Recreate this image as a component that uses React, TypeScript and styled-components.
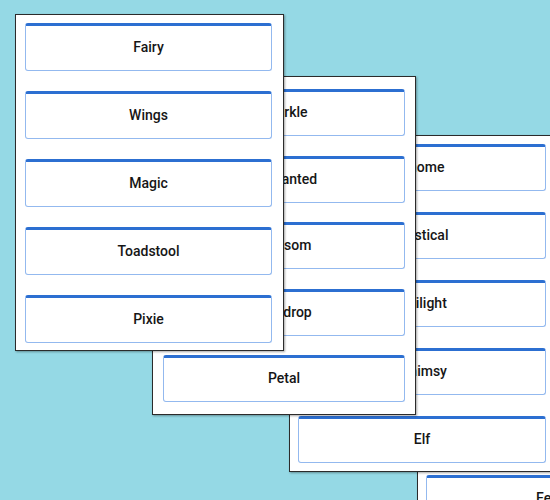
import React from 'react';
import styled, { createGlobalStyle } from 'styled-components';

interface CardData {
  left: number;
  top: number;
  width: number;
  height: number;
  padding: string;
  btnHeight: number;
  gap: number;
  words: string[];
}

const cards: CardData[] = [
  { left: 15, top: 14, width: 269, height: 337, padding: '8px 11px 7px 9px', btnHeight: 48, gap: 20, words: ['Fairy', 'Wings', 'Magic', 'Toadstool', 'Pixie'] },
  { left: 152, top: 76, width: 264, height: 339, padding: '12px 10px 13px 10px', btnHeight: 47, gap: 19.5, words: ['Sparkle', 'Enchanted', 'Blossom', 'Dewdrop', 'Petal'] },
  { left: 289, top: 135, width: 269, height: 337, padding: '8px 11px 8px 8px', btnHeight: 47, gap: 21, words: ['Gnome', 'Mystical', 'Twilight', 'Whimsy', 'Elf'] },
  { left: 417, top: 466, width: 269, height: 60, padding: '8px 11px 8px 8px', btnHeight: 47, gap: 21, words: ['Fern'] },
];

const App: React.FC = () => {
  return (
    <>
      <GlobalStyle />
      <Desk>
        {cards.map((card, i) => (
          <Card
            key={i}
            $width={card.width}
            $height={card.height}
            $padding={card.padding}
            $gap={card.gap}
            style={{ left: card.left, top: card.top, zIndex: cards.length - i }}
          >
            {card.words.map((word) => (
              <WordButton key={word} $height={card.btnHeight}>
                {word}
              </WordButton>
            ))}
          </Card>
        ))}
      </Desk>
    </>
  );
};

const GlobalStyle = createGlobalStyle`
  html, body {
    margin: 0;
    padding: 0;
    background: #95d9e5;
  }
  * {
    box-sizing: border-box;
  }
`;

const Desk = styled.div`
  position: relative;
  width: 550px;
  height: 500px;
  overflow: hidden;
  background: #95d9e5;
  font-family: Roboto, 'Liberation Sans', sans-serif;
`;

const Card = styled.div<{ $width: number; $height: number; $padding: string; $gap: number }>`
  position: absolute;
  display: flex;
  flex-direction: column;
  gap: ${(p) => p.$gap}px;
  width: ${(p) => p.$width}px;
  height: ${(p) => p.$height}px;
  padding: ${(p) => p.$padding};
  background: #ffffff;
  border: 1px solid #2b2b2b;
  box-shadow: 1px 1px 2px rgba(0, 0, 0, 0.35);
`;

const WordButton = styled.button<{ $height: number }>`
  display: flex;
  align-items: center;
  justify-content: center;
  flex-shrink: 0;
  width: 100%;
  height: ${(p) => p.$height}px;
  padding: 0 0 3px;
  background: #ffffff;
  border: 1px solid #93b9ef;
  border-top: 3px solid #2c6fd1;
  border-radius: 3px;
  font-family: Roboto, 'Liberation Sans', sans-serif;
  font-size: 14px;
  font-weight: 500;
  color: #161616;
  cursor: pointer;
`;

export default App;
